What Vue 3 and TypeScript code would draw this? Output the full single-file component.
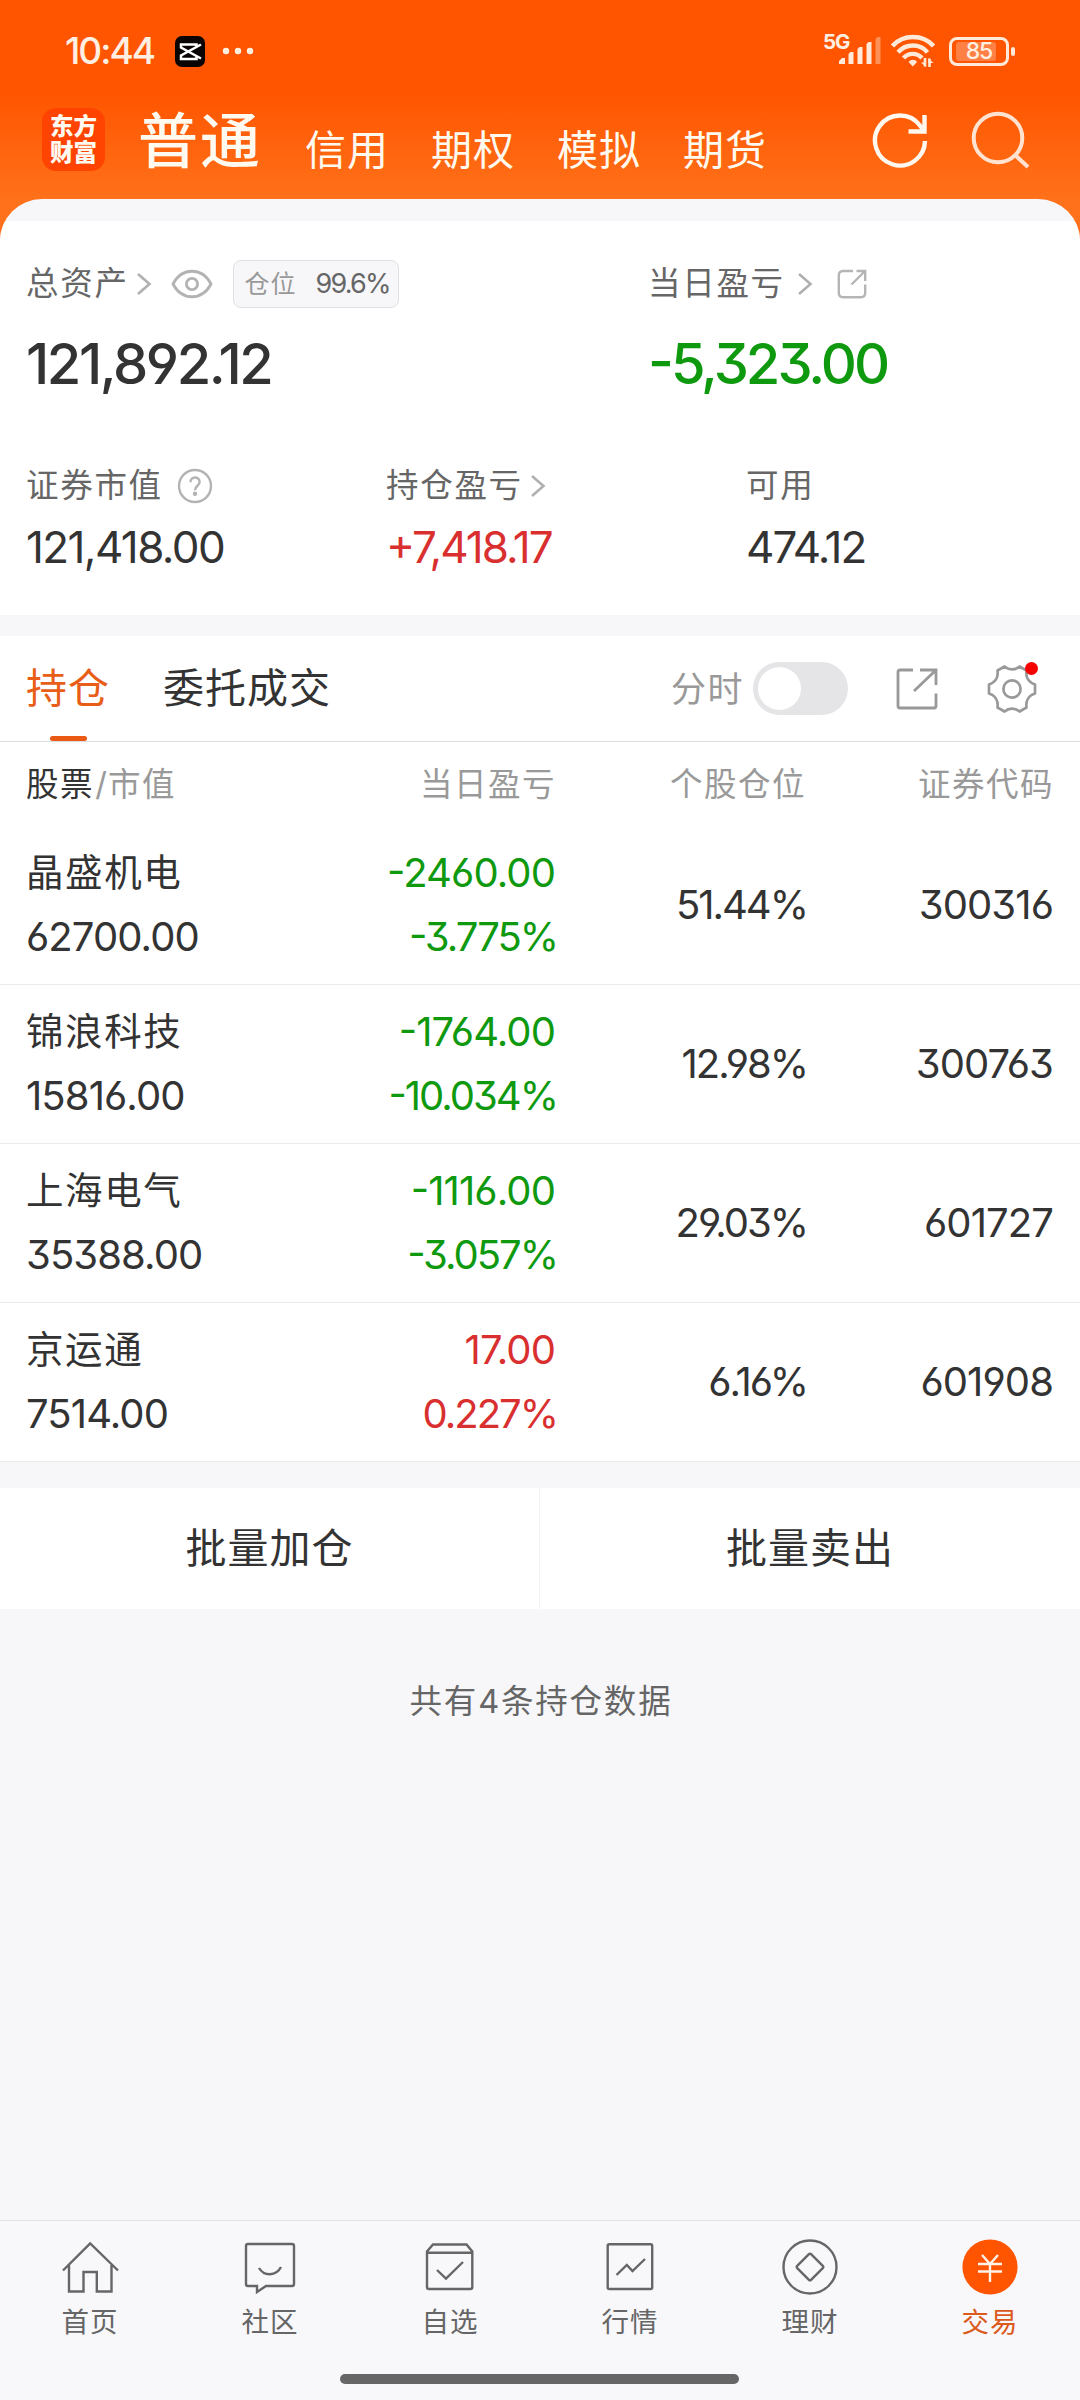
<script setup lang="ts">
interface Holding {
  name: string
  value: string
  pnl: string
  rate: string
  share: string
  code: string
  trend: 'up' | 'down'
}

const accounts: string[] = ['信用', '期权', '模拟', '期货']

const holdings: Holding[] = [
  { name: '晶盛机电', value: '62700.00', pnl: '-2460.00', rate: '-3.775%', share: '51.44%', code: '300316', trend: 'down' },
  { name: '锦浪科技', value: '15816.00', pnl: '-1764.00', rate: '-10.034%', share: '12.98%', code: '300763', trend: 'down' },
  { name: '上海电气', value: '35388.00', pnl: '-1116.00', rate: '-3.057%', share: '29.03%', code: '601727', trend: 'down' },
  { name: '京运通', value: '7514.00', pnl: '17.00', rate: '0.227%', share: '6.16%', code: '601908', trend: 'up' },
]
</script>

<template>
  <div class="screen">
    <header class="top">
      <div class="status">
        <span class="clock">10:44</span>
        <svg class="capcut" width="30" height="31" viewBox="0 0 30 31">
          <rect width="30" height="31" rx="7" fill="#0a0504" />
          <path d="M26 8.500 6 19.500V23h15.500V20.500M26 22.500 6 11.500V8.500h15.500V10.500" fill="none" stroke="#fff" stroke-width="2.500" />
        </svg>
        <svg class="more" width="32" height="8" viewBox="0 0 32 8" fill="#fff0e2">
          <circle cx="4" cy="4" r="3.200" /><circle cx="16" cy="4" r="3.200" /><circle cx="28" cy="4" r="3.200" />
        </svg>
        <span class="net">5G</span>
        <svg class="signal" width="42" height="28" viewBox="0 0 42 28" fill="#ffe9d9">
          <path d="M0 27v-3l3-3h3v6zM9.500 27V17l2-2h3v12zM18.500 27V12l2-2h3v17zM27.500 27V7l2-2h3v22z" />
          <path d="M36.500 27V2l2-2H41.500v27z" opacity=".4" />
        </svg>
        <svg class="wifi" width="44" height="34" viewBox="0 0 44 34" fill="none" stroke="#ffe9d9" stroke-width="4.400">
          <path d="M1.500 12C12 0 32 0 42.500 12M7 18.300c8-9 22-9 29.500 0M12.500 24c5-5.500 13.500-5.500 18.500 0" />
          <path d="M17.500 28c2.500-3 6.500-3 8.500 0l-4.200 4.500z" fill="#ffe9d9" stroke="none" />
          <path d="M34 24v8.500M38.500 33v-8.500" stroke-width="2.600" />
          <path d="M30 28.500h5v4.500zM37.500 24.500l5 4.500h-5z" fill="#ffe9d9" stroke="none" />
        </svg>
        <div class="battery"><span class="charge"></span><span class="level">85</span></div>
        <span class="nub"></span>
      </div>
      <nav class="accounts">
        <div class="logo"><span>东方</span><span>财富</span></div>
        <span class="account-main">普通</span>
        <span v-for="a in accounts" :key="a" class="account">{{ a }}</span>
        <svg class="refresh" width="60" height="60" viewBox="0 0 60 60" fill="none" stroke="#fff8ef" stroke-width="4.400">
          <path d="M55 30A25 25 0 1 1 50 14.500L54 20" />
          <path d="M54.500 4V20.500H38.500" />
        </svg>
        <svg class="search" width="60" height="60" viewBox="0 0 60 60" fill="none" stroke="#ffe3d0" stroke-width="4">
          <circle cx="28" cy="28" r="24.300" />
          <path d="M45 45 58 57" />
        </svg>
      </nav>
    </header>

    <main class="sheet">
      <section class="assets">
        <div class="row labels">
          <div class="left">
            <span class="label">总资产</span>
            <svg class="chev c1" width="16" height="24" viewBox="0 0 16 24"><path d="M2 2 13.500 12 2 22" /></svg>
            <svg class="eye" width="42" height="30" viewBox="0 0 42 30" fill="none" stroke="#b3b3b3" stroke-width="2.800">
              <path d="M2 15C11-2 31-2 40 15 31 32 11 32 2 15z" /><circle cx="21" cy="15" r="5.600" />
            </svg>
            <div class="badge"><span class="badge-label">仓位</span><span class="badge-num">99.6%</span></div>
          </div>
          <div class="right">
            <span class="label">当日盈亏</span>
            <svg class="chev c2" width="16" height="24" viewBox="0 0 16 24"><path d="M2 2 13.500 12 2 22" /></svg>
            <svg class="share" width="30" height="30" viewBox="0 0 30 30" fill="none" stroke="#b5b5b5" stroke-width="2.400">
              <path d="M16 2H6Q1.800 2 1.800 6.500V24Q1.800 28.200 6 28.200H24Q28.200 28.200 28.200 24V15.500M14.500 15.500 27.500 2.500M19.500 2H28.200V12" />
            </svg>
          </div>
        </div>
        <div class="row big">
          <div class="left num total">121,892.12</div>
          <div class="right num down total today">-5,323.00</div>
        </div>
        <div class="thirds">
          <div class="third">
            <div class="label-line">
              <span class="label">证券市值</span>
              <svg class="help" width="36" height="36" viewBox="0 0 36 36" fill="none" stroke="#b3b3b3" stroke-width="2.400">
                <circle cx="18" cy="18" r="16" /><path d="M13.400 14.200C13.600 8 22.600 8 22.600 14 22.600 18 18 17.500 18 22.300" /><circle cx="18" cy="25.800" r="1" />
              </svg>
            </div>
            <div class="num mid wide">121,418.00</div>
          </div>
          <div class="third">
            <div class="label-line">
              <span class="label">持仓盈亏</span>
              <svg class="chev c1" width="16" height="24" viewBox="0 0 16 24"><path d="M2 2 13.500 12 2 22" /></svg>
            </div>
            <div class="num mid up">+7,418.17</div>
          </div>
          <div class="third">
            <div class="label-line"><span class="label">可用</span></div>
            <div class="num mid">474.12</div>
          </div>
        </div>
      </section>

      <section class="positions">
        <div class="tabs">
          <div class="tab active">持仓</div>
          <div class="tab">委托成交</div>
          <span class="timeline">分时</span>
          <div class="toggle"><span class="knob"></span></div>
          <svg class="open" width="42" height="42" viewBox="0 0 42 42" fill="none" stroke="#999" stroke-width="2.800">
            <path d="M17 2H4Q2 2 2 4V38Q2 40 4 40H38Q40 40 40 38V25.500M18 23 39 3M24 2H40V17" />
          </svg>
          <div class="gear">
            <svg width="50" height="50" viewBox="0 0 50 50" fill="none" stroke="#999" stroke-width="2.700" stroke-linejoin="round">
              <path d="M17.500 2.500C22 6.300 28 6.300 32.500 2.500L39.500 6.500C38.500 13 41.500 18.500 48 20.500V29.500C41.500 31.500 38.500 37 39.500 43.500L32.500 47.500C28 43.700 22 43.700 17.500 47.500L10.500 43.500C11.500 37 8.500 31.500 2 29.500V20.500C8.500 18.500 11.500 13 10.500 6.500z" />
              <circle cx="25" cy="25" r="8.600" />
            </svg>
            <i class="dot"></i>
          </div>
        </div>
        <div class="grid head">
          <div><b>股票</b><span class="slash">/</span>市值</div>
          <div class="r">当日盈亏</div>
          <div class="r">个股仓位</div>
          <div class="r">证券代码</div>
        </div>
        <div v-for="h in holdings" :key="h.code" class="grid holding">
          <div class="stack">
            <span class="name">{{ h.name }}</span>
            <span class="num cell">{{ h.value }}</span>
          </div>
          <div class="stack r" :class="h.trend">
            <span class="num cell">{{ h.pnl }}</span>
            <span class="num cell pct">{{ h.rate }}</span>
          </div>
          <div class="num cell r pct single">{{ h.share }}</div>
          <div class="num cell r single">{{ h.code }}</div>
        </div>
      </section>

      <section class="batch">
        <div class="action">批量加仓</div>
        <div class="action">批量卖出</div>
      </section>
      <p class="summary">共有4条持仓数据</p>
    </main>

    <footer class="bottom">
      <div class="nav">
        <div class="item">
          <svg viewBox="0 0 60 60"><path d="M3 32.500 30.200 5.500 58 32.500M9 27V53.500H23.500V34H36.800V53.500H51.500V27" /></svg>
          <span>首页</span>
        </div>
        <div class="item">
          <svg viewBox="0 0 60 60"><path d="M8 6H52Q54 6 54 8V46Q54 48 52 48H26L17 54V48H8Q6 48 6 46V8Q6 6 8 6zM19 30C24 38.500 36 38.500 41 29" /></svg>
          <span>社区</span>
        </div>
        <div class="item">
          <svg viewBox="0 0 60 60"><path d="M13 6.500H46.500L52.300 13.500V49Q52.300 51 50.300 51H9Q7 51 7 49V13.500zM7 14.700H52M17 32 26 40.500 43 24" /></svg>
          <span>自选</span>
        </div>
        <div class="item">
          <svg viewBox="0 0 60 60"><rect x="7.700" y="6.300" width="44.500" height="44.700" rx="1.500" /><path d="M16.500 37 26.800 27 32.500 33 45 21" /></svg>
          <span>行情</span>
        </div>
        <div class="item">
          <svg viewBox="0 0 60 60"><circle cx="30" cy="29" r="26.500" /><rect x="20.200" y="19.200" width="19.600" height="19.600" rx="1.500" transform="rotate(45 30 29)" /></svg>
          <span>理财</span>
        </div>
        <div class="item on">
          <svg viewBox="0 0 60 60"><circle cx="30" cy="29" r="27.600" fill="#ff5500" stroke="none" /><path d="M22 17 30 26 38 17M18 26H42M18 33.500H42M30 26V44" stroke="#fff3ea" /></svg>
          <span>交易</span>
        </div>
      </div>
      <div class="indicator"></div>
    </footer>
  </div>
</template>

<style>
body {
  background: #f7f8fa;
}
</style>

<style scoped>
.screen {
  width: 1080px;
  height: 2400px;
  display: flex;
  flex-direction: column;
  overflow: hidden;
  box-sizing: border-box;
  background: #f7f8fa;
  color: #333;
  font-family: Inter, "Noto Sans CJK SC", sans-serif;
  white-space: nowrap;
}
svg { display: block; flex: none; }
.top {
  height: 260px;
  flex: none;
  background: linear-gradient(#ff5500 0, #ff5500 92px, #ff711a 200px, #ff711a 100%);
}
.status {
  height: 102px;
  display: flex;
  align-items: center;
  color: #ffefe2;
  padding-left: 65px;
}
.clock { width: 110px; font-size: 37px; font-weight: 500; letter-spacing: -2px; line-height: 102px; }
.more { margin-left: 17px; }
.net { margin-left: 569px; width: 16px; font-size: 20.500px; font-weight: 700; line-height: 20px; margin-bottom: 19px; letter-spacing: -1px; }
.signal { margin-bottom: 1px; }
.wifi { margin-left: 10px; }
.battery {
  margin-left: 14px;
  width: 60px;
  height: 29px;
  box-sizing: border-box;
  border: 3px solid #ffe9d9;
  border-radius: 8px;
  padding: 2px 4px;
  display: grid;
  align-items: center;
}
.charge, .level { grid-area: 1 / 1; }
.charge { width: 40px; height: 19px; border-radius: 3px; background: #ff8044; }
.level { text-align: center; font-size: 23px; font-weight: 500; line-height: 19px; letter-spacing: -1px; }
.nub { margin-left: 2px; width: 4px; height: 9px; border-radius: 2px; background: #ffe9d9; }
.accounts {
  height: 97px;
  display: flex;
  color: #fffaf0;
  padding-left: 42px;
}
.logo {
  flex: none;
  margin-top: 6px;
  width: 63px;
  height: 63px;
  border-radius: 14px;
  background: #ff4300;
  display: flex;
  flex-direction: column;
  align-items: center;
  justify-content: center;
  font-size: 23.500px;
  font-weight: 900;
  line-height: 26px;
}
.account-main { flex: none; margin-left: 33px; width: 167px; font-size: 60px; font-weight: 500; letter-spacing: 2px; line-height: 79px; }
.account { flex: none; width: 126px; font-size: 41px; letter-spacing: 1px; line-height: 97px; }
.refresh { margin: 9px 0 0 61px; }
.search { margin: 8px 0 0 40px; }
.sheet {
  flex: 1;
  margin-top: -61px;
  padding-top: 22px;
  border-radius: 42px 42px 0 0;
  background: #f7f7fa;
  overflow: hidden;
}
.assets {
  height: 394px;
  background: #fff;
  box-sizing: border-box;
  padding: 39px 0 0 26px;
}
.row { display: flex; }
.left, .right { display: flex; align-items: center; }
.left { width: 622px; }
.labels { height: 47px; }
.label { font-size: 32.500px; letter-spacing: 1.700px; line-height: 46px; color: #666; }
.chev { fill: none; stroke: #b0b0b0; stroke-width: 2.600; }
.c1 { margin-left: 7px; }
.c2 { margin-left: 12px; }
.eye { margin-left: 19px; }
.badge {
  margin-left: 20px;
  width: 166px;
  height: 48px;
  box-sizing: border-box;
  border: 1.500px solid #e0e0e3;
  border-radius: 8px;
  background: #f7f7fa;
  display: flex;
  align-items: center;
  padding-left: 11px;
}
.badge-label { width: 71px; color: #999; font-size: 25px; letter-spacing: 1px; line-height: 44px; }
.badge-num { color: #666; font-size: 27px; letter-spacing: -1.800px; line-height: 44px; }
.share { margin-left: 24px; }
.num { font-feature-settings: "cv03", "cv04", "cv09", "case"; }
.big { height: 74px; margin-top: 20px; align-items: center; }
.total { font-size: 56px; font-weight: 500; letter-spacing: -2.400px; line-height: 76px; }
.total.today { letter-spacing: -3px; }
.down { color: #0f990f; }
.up { color: #d92f2f; }
.thirds { display: flex; margin-top: 61px; }
.third { flex: none; width: 360px; }
.label-line { height: 48px; display: flex; align-items: center; }
.help { margin-left: 14px; }
.mid { font-size: 44px; line-height: 60px; margin-top: 7px; letter-spacing: -2px; }
.mid.wide { letter-spacing: -1.600px; }
.positions { margin-top: 21px; background: #fff; }
.tabs {
  height: 106px;
  box-sizing: border-box;
  border-bottom: 1px solid #ddd;
  padding-left: 26px;
  display: flex;
  align-items: center;
}
.tab { font-size: 41px; letter-spacing: 1px; margin-right: 53px; line-height: 105px; position: relative; }
.tab.active { color: #e85d17; }
.tab.active::after {
  content: "";
  position: absolute;
  left: 24px;
  bottom: 0;
  width: 37px;
  height: 5px;
  border-radius: 3px;
  background: #ea5a14;
}
.timeline { margin-left: 287px; width: 82px; font-size: 35px; letter-spacing: 1.500px; line-height: 50px; color: #999; }
.toggle {
  width: 95px;
  height: 53px;
  border-radius: 27px;
  background: #e5e5e7;
  box-sizing: border-box;
  padding: 5px;
}
.knob { display: block; width: 43px; height: 43px; border-radius: 50%; background: #fff; }
.open { margin-left: 48px; }
.gear { margin-left: 49px; position: relative; }
.dot { position: absolute; left: 38px; top: -2px; width: 13px; height: 13px; border-radius: 50%; background: #f60000; }
.grid {
  display: grid;
  grid-template-columns: 301px 228px 250px 248px;
  padding-left: 26px;
}
.r { text-align: right; }
.head { height: 84px; line-height: 85px; font-size: 32.500px; letter-spacing: 1.500px; color: #999; }
.head b { font-weight: 400; color: #333; }
.slash { display: inline-block; width: 14px; text-align: center; letter-spacing: 0; }
.head .r { margin-right: -1px; }
.holding { height: 159px; box-sizing: border-box; border-bottom: 1px solid #ebebeb; }
.stack { display: flex; flex-direction: column; padding-top: 15px; }
.name { font-size: 37.500px; letter-spacing: 1.600px; line-height: 64px; }
.cell { font-size: 40px; line-height: 64px; letter-spacing: -0.900px; }
.r .cell { margin-right: 0; }
.cell.pct { letter-spacing: -2px; margin-right: -2px; }
.cell.single { line-height: 158px; }
.batch { margin-top: 26px; height: 121px; background: #fff; display: flex; }
.action { width: 539px; text-align: center; font-size: 41px; letter-spacing: 1px; line-height: 121px; box-sizing: border-box; }
.action + .action { width: 541px; border-left: 1px solid #f3f3f5; }
.summary { margin: 69px 0 0 2px; text-align: center; font-size: 32.500px; letter-spacing: 1.800px; line-height: 48px; color: #666; }
.bottom {
  height: 180px;
  flex: none;
  box-sizing: border-box;
  border-top: 1px solid #e1e3e6;
  background: #f8f8fb;
}
.nav { display: flex; padding-top: 17px; }
.item { width: 180px; display: flex; flex-direction: column; align-items: center; color: #666; }
.item svg { width: 60px; height: 60px; fill: none; stroke: #666; stroke-width: 2.400; }
.item span { margin-top: 3px; font-size: 27.500px; letter-spacing: 1px; line-height: 42px; }
.item.on { color: #dc5a1c; }
.indicator { margin: 31px 0 0 340px; width: 399px; height: 10px; border-radius: 5px; background: #666; }
</style>
